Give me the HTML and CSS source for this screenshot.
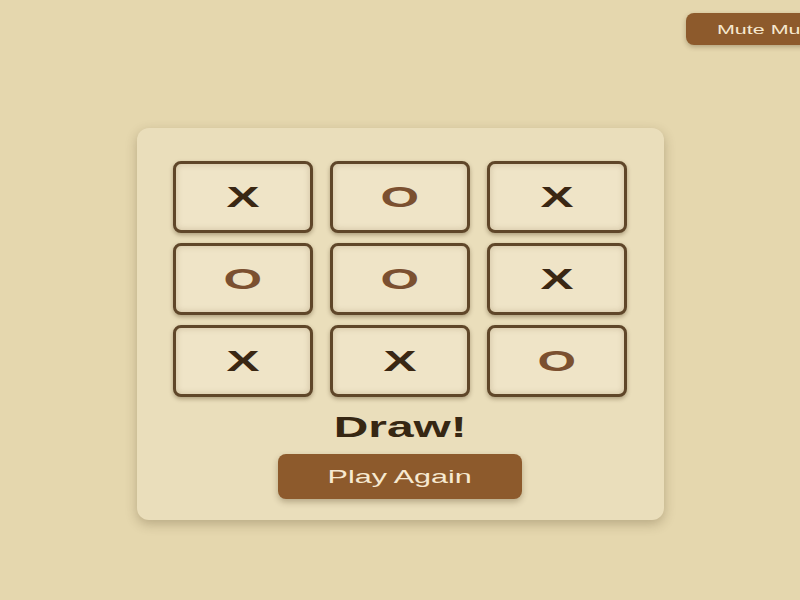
FILE: index.html
```html
<!DOCTYPE html>
<html lang="en">
  <head>
    <meta charset="UTF-8" />
    <meta name="viewport" content="width=device-width, initial-scale=1.0" />
    <title>Tic Tac Toe</title>
    <link rel="stylesheet" href="styles.css">
  </head>
  <body>
    <div class="topbar">
      <button class="mute-btn"><span class="wide">Mute Music</span></button>
    </div>

    <div class="game">
      <div class="board">
        <div class="cell x"><span class="wide">X</span></div>
        <div class="cell o"><span class="wide">O</span></div>
        <div class="cell x"><span class="wide">X</span></div>
        <div class="cell o"><span class="wide">O</span></div>
        <div class="cell o"><span class="wide">O</span></div>
        <div class="cell x"><span class="wide">X</span></div>
        <div class="cell x"><span class="wide">X</span></div>
        <div class="cell x"><span class="wide">X</span></div>
        <div class="cell o"><span class="wide">O</span></div>
      </div>
      <div class="status"><span class="wide">Draw!</span></div>
      <button class="again-btn"><span class="wide">Play Again</span></button>
    </div>
  </body>
</html>
```

FILE: styles.css
```css
html,
body {
  margin: 0;
  height: 100%;
  overflow: hidden;
}
body {
  background-color: #e5d7ae;
  font-family: "Liberation Sans", Arial, sans-serif;
  color: #3e2b16;
}

/* text is drawn wide */
.wide {
  display: inline-block;
  transform: scaleX(1.65);
}

/* 상단 음악 버튼 */
.topbar {
  display: flex;
  justify-content: flex-end;
  padding-top: 13px;
  height: 32px;
}
.mute-btn {
  width: 150px;
  height: 32px;
  margin-right: -36px;
  border: none;
  border-radius: 8px;
  background-color: #8d5a2c;
  color: #f6e8cf;
  font-family: inherit;
  font-size: 13px;
  text-align: left;
  padding: 0 0 0 31px;
  box-shadow: 0 2px 5px rgba(60, 40, 10, 0.3);
}
.mute-btn .wide {
  transform-origin: left center;
}

/* 게임 카드 */
.game {
  width: 527px;
  margin: 83px auto 0;
  box-sizing: border-box;
  padding: 33px 37px 21px;
  background-color: #eadebb;
  border-radius: 12px;
  box-shadow: 0 4px 12px rgba(70, 50, 20, 0.28);
  display: flex;
  flex-direction: column;
  align-items: center;
}
.board {
  display: grid;
  grid-template-columns: repeat(3, 140px);
  grid-auto-rows: 72px;
  column-gap: 17px;
  row-gap: 10px;
}
.cell {
  box-sizing: border-box;
  border: 3px solid #5f4629;
  border-radius: 8px;
  background-color: #efe4c7;
  box-shadow: 0 2px 4px rgba(60, 40, 10, 0.35), inset 0 0 6px rgba(90, 60, 20, 0.22);
  display: flex;
  align-items: center;
  justify-content: center;
  font-size: 30px;
  font-weight: bold;
}
.cell.x {
  color: #3a2713;
}
.cell.o {
  color: #7b5030;
}

.status {
  margin-top: 13px;
  font-size: 29px;
  font-weight: bold;
  color: #362713;
  line-height: 34px;
}
.again-btn {
  margin-top: 10px;
  width: 244px;
  height: 45px;
  border: none;
  border-radius: 8px;
  background-color: #8d5a2c;
  color: #f7e9d0;
  font-family: inherit;
  font-size: 18.5px;
  box-shadow: 0 3px 6px rgba(60, 40, 10, 0.3);
}
```
